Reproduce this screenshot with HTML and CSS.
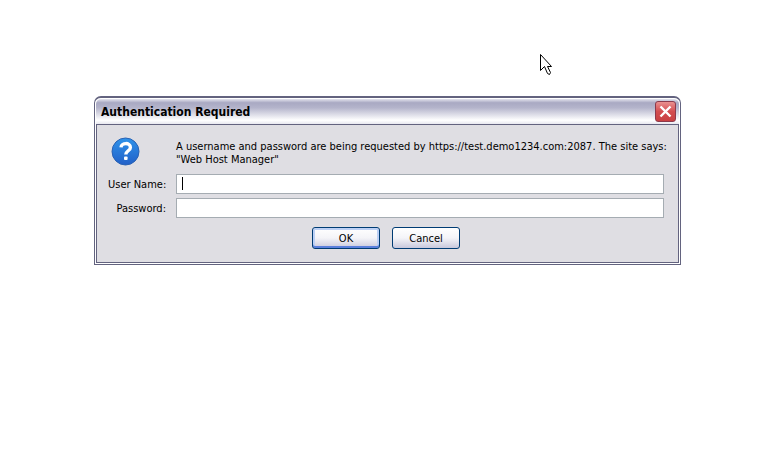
FILE: index.html
```html
<!DOCTYPE html>
<html lang="en">
<head>
    <meta charset="UTF-8">
    <meta name="viewport" content="width=device-width, initial-scale=1.0">
    <title>Authentication Required</title>
    <link rel="stylesheet" href="styles.css">
</head>
<body>
    <div class="dialog" role="dialog" aria-labelledby="dialog_title">
        <div class="titlebar">
            <h1 id="dialog_title">Authentication Required</h1>
            <button class="close" type="button" aria-label="Close">
                <svg width="21" height="21" viewBox="0 0 21 21">
                    <path d="M5.5 5.5L15.5 15.5M15.5 5.5L5.5 15.5" stroke="#fff" stroke-width="2.4"/>
                </svg>
            </button>
        </div>
        <form class="panel">
            <div class="fields">
                <svg class="question" width="29" height="29" viewBox="0 0 29 29">
                    <defs>
                        <linearGradient id="blue" x1="0" y1="0" x2="0" y2="1">
                            <stop offset="0" stop-color="#2f93ea"/>
                            <stop offset="1" stop-color="#2260c8"/>
                        </linearGradient>
                    </defs>
                    <circle cx="14.5" cy="14.5" r="13.5" fill="url(#blue)" stroke="#2a62b4"/>
                    <path d="M10 10.4C10.3 5.4 19.4 5.2 19.4 10.4C19.4 13.8 14.8 13.8 14.8 17.6" fill="none" stroke="#fff" stroke-width="3.4"/>
                    <rect x="13" y="19.5" width="3.6" height="3.6" rx="1" fill="#fff"/>
                </svg>
                <p class="message">A username and password are being requested by https://test.demo1234.com:2087. The site says:<br>"Web Host Manager"</p>

                <label for="username">User Name:</label>
                <div class="field">
                    <input type="text" id="username" name="username">
                    <span class="caret"></span>
                </div>

                <label for="password">Password:</label>
                <div class="field">
                    <input type="password" id="password" name="password">
                </div>
            </div>
            <div class="buttons">
                <button class="btn ok" type="submit">OK</button>
                <button class="btn" type="button">Cancel</button>
            </div>
        </form>
    </div>

    <svg class="pointer" width="13" height="22" viewBox="0 0 13 22">
        <path d="M0.5 0.5V16.5L4.5 12.5L7.5 19.5L9.5 20.5L10.5 18.5L7.5 12.5H11.5Z" fill="#fff" stroke="#000"/>
    </svg>
</body>
</html>
```

FILE: styles.css
```css
* {
    box-sizing: border-box;
}

body {
    margin: 0;
    padding: 96px 95px 0 94px;
    background-color: #fff;
    color: #000;
    font-family: "DejaVu Sans Condensed", Tahoma, sans-serif;
    font-size: 11px;
    line-height: 13px;
}

.dialog {
    padding: 1px;
    border: 1px solid #63637f;
    border-top-width: 2px;
    border-radius: 7px 7px 0 0;
    background-color: #fff;
}

.titlebar {
    display: flex;
    align-items: center;
    justify-content: space-between;
    height: 25px;
    padding: 0 3px 0 5px;
    border-radius: 5px 5px 0 0;
    background: linear-gradient(#e4e4ee, #a9a9c3 15%, #b4b4cb 35%, #fff 85%, #e8e8f0);
}

.titlebar h1 {
    margin: 0;
    font-size: 12px;
    line-height: 16px;
}

.close {
    width: 21px;
    height: 21px;
    padding: 0;
    border: 1px solid #8c3a4c;
    border-radius: 3px;
    background: linear-gradient(#ea9090, #d34d50 50%, #c94043);
}

.close svg {
    display: block;
    margin: -1px;
}

.panel {
    padding: 12px 14px 13px 11px;
    border: 1px solid #63637f;
    background-color: #dfdee3;
}

.fields {
    display: grid;
    grid-template-columns: 58px minmax(0, 1fr);
    column-gap: 10px;
    row-gap: 4px;
    align-items: center;
}

.question {
    margin: 0 0 4px 3px;
}

.message {
    margin: 0 0 2px;
    white-space: nowrap;
}

.fields label {
    text-align: right;
    white-space: nowrap;
}

.field {
    position: relative;
    display: flex;
}

.field input {
    width: 100%;
    height: 20px;
    padding: 2px 5px;
    border: 1px solid #a5acb2;
    background-color: #fff;
    font: inherit;
    outline: none;
}

.caret {
    position: absolute;
    top: 3px;
    left: 6px;
    width: 1px;
    height: 13px;
    background-color: #000;
}

.buttons {
    display: flex;
    justify-content: center;
    gap: 12px;
    margin-top: 9px;
}

.btn {
    width: 68px;
    height: 22px;
    padding: 0;
    border: 1px solid #003c74;
    border-radius: 3px;
    background: linear-gradient(#fff, #f4f4f8 50%, #c8c8dc);
    font: inherit;
    color: #000;
}

.ok {
    box-shadow: inset 0 -2px #5a7fdc, inset 0 0 0 2px #bcd0f5;
}

.pointer {
    position: absolute;
    top: 54px;
    left: 540px;
}
```
